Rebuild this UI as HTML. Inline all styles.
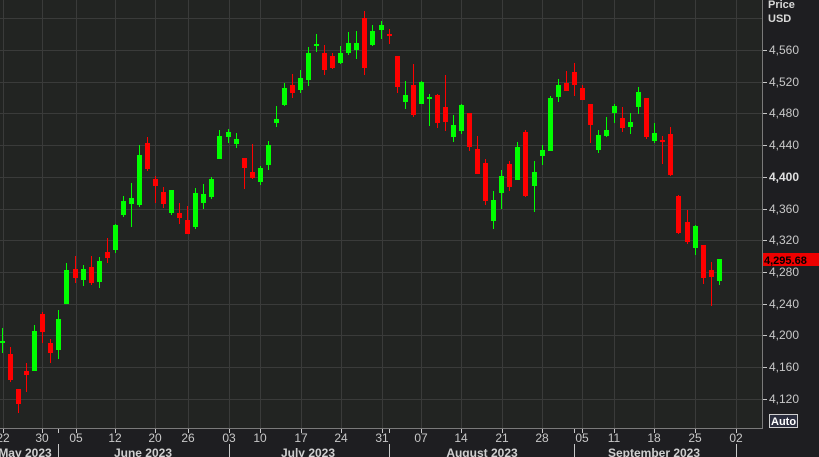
<!DOCTYPE html>
<html><head><meta charset="utf-8"><style>
html,body{margin:0;padding:0;background:#1e1e21;width:819px;height:457px;overflow:hidden}
svg{display:block}
text{font-family:"Liberation Sans",sans-serif}
</style></head><body>
<svg id="s" width="819" height="457" xmlns="http://www.w3.org/2000/svg">
<rect x="0" y="0" width="819" height="457" fill="#1e1e21"/>
<rect x="0" y="0" width="762" height="428" fill="#222422"/>
<g id="grid" stroke="#3a3b3a" stroke-width="1"></g>
<g id="c"></g>
<line x1="762.5" y1="0" x2="762.5" y2="428" stroke="#7a7a7a"/>
<line x1="0" y1="428.5" x2="763" y2="428.5" stroke="#7a7a7a"/>
<g id="ax" fill="#c8c8c8" font-size="12"></g>
<text x="768" y="8" fill="#d8d8d8" font-size="11" font-weight="bold">Price</text>
<text x="768" y="22" fill="#d8d8d8" font-size="11" font-weight="bold">USD</text>
<rect x="763" y="253" width="56" height="13" fill="#ee0000"/>
<text x="764" y="264" fill="#000" font-size="11" font-weight="bold">4,295.68</text>
<rect x="769.5" y="414.5" width="28" height="13" fill="#2b2e3e" stroke="#d0d0d0"/>
<text x="771" y="425" fill="#fff" font-size="11" font-weight="bold">Auto</text>
<g id="bx" fill="#c8c8c8" font-size="12"></g>
</svg>
<script>
var ns="http://www.w3.org/2000/svg";
function el(p,t,a,txt){var e=document.createElementNS(ns,t);for(var k in a)e.setAttribute(k,a[k]);if(txt)e.textContent=txt;document.getElementById(p).appendChild(e);return e;}
var vx=[3,42,76,115,155,188,229,260,301,341,382,421,461,502,542,582,614,654,695,736];
vx.forEach(function(x){el("grid","line",{x1:x+.5,y1:0,x2:x+.5,y2:428});});
var levels=[4600,4560,4520,4480,4440,4400,4360,4320,4280,4240,4200,4160,4120];
levels.forEach(function(p){var y=Math.round(50+(4560-p)*0.7927);
 el("grid","line",{x1:0,y1:y+.5,x2:762,y2:y+.5});
 if(p<4600){el("ax","line",{x1:763,y1:y+.5,x2:767,y2:y+.5,stroke:"#c8c8c8"});
 var t=el("ax","text",{x:769,y:y+4},(p+"").replace(/(\d)(\d{3})$/,"$1,$2"));
 if(p==4400){t.setAttribute("font-weight","bold");t.setAttribute("fill","#e0e0e0");}}
});
var days=[[3,"22"],[42,"30"],[76,"05"],[115,"12"],[155,"20"],[188,"26"],[229,"03"],[260,"10"],[301,"17"],[341,"24"],[382,"31"],[421,"07"],[461,"14"],[502,"21"],[542,"28"],[582,"05"],[614,"11"],[654,"18"],[695,"25"],[736,"02"]];
days.forEach(function(d){el("bx","line",{x1:d[0]+.5,y1:429,x2:d[0]+.5,y2:433,stroke:"#c8c8c8"});el("bx","text",{x:d[0],y:442,"text-anchor":"middle"},d[1]);});
[58,229,389,574,736].forEach(function(x){el("bx","line",{x1:x+.5,y1:429,x2:x+.5,y2:433,stroke:"#c8c8c8"});});
[229,389,574,736].forEach(function(x){el("bx","line",{x1:x+.5,y1:444,x2:x+.5,y2:457,stroke:"#c8c8c8"});});
el("bx","line",{x1:58.5,y1:444,x2:58.5,y2:457,stroke:"#c8c8c8"});
[[25,"May 2023"],[143,"June 2023"],[308,"July 2023"],[482,"August 2023"],[654,"September 2023"]].forEach(function(m){el("bx","text",{x:m[0],y:457,"text-anchor":"middle","font-weight":"bold",fill:"#d0d0d0"},m[1]);});
var C=[
[2,341,343,328,353,1],[10,354,380,347,382,0],[18,389,404,389,413,0],[26,371,375,363,392,0],[34,331,371,325,371,1],[42,314,332,312,343,0],[50,343,353,339,363,0],[58,319,350,310,359,1],[66,270,304,263,304,1],[75,269,278,256,283,0],[83,269,280,265,286,1],[91,267,283,256,285,0],[99,261,282,257,288,1],[107,252,258,238,263,0],[115,225,250,224,253,1],[123,201,215,196,217,1],[131,198,204,183,227,1],[139,155,205,145,207,1],[147,143,169,137,171,0],[155,179,186,176,203,0],[163,192,204,187,208,0],[171,190,213,190,215,1],[179,213,218,203,224,0],[187,220,234,206,234,0],[195,193,227,188,229,1],[203,194,203,184,209,1],[211,179,197,177,199,1],[219,136,159,130,159,1],
[228,132,137,129,143,1],[236,139,144,133,148,1],[244,158,168,158,189,0],[252,172,178,144,179,0],[260,168,182,166,185,1],[268,145,165,141,170,1],[276,119,123,106,127,1],[284,88,105,83,106,1],[292,85,93,74,98,0],[300,78,90,70,93,1],[308,53,80,47,86,1],[316,44,46,34,52,1],[324,53,70,45,75,0],[332,56,68,53,69,0],[340,53,63,46,64,1],[348,43,53,32,55,1],[356,43,50,31,59,1],[364,18,68,11,75,0],[372,31,45,25,46,1],[381,25,30,21,39,1],[389,34,35,29,44,0],
[397,56,87,56,93,0],[405,95,102,81,109,1],[413,85,115,64,117,0],[421,82,104,81,104,1],[429,97,99,94,126,1],[437,95,123,94,128,0],[445,107,122,75,131,0],[453,125,137,115,142,1],[461,105,131,104,134,1],[469,113,147,113,151,0],[477,149,174,136,174,0],[485,163,201,159,205,0],[493,200,221,191,229,1],[501,176,193,170,209,1],[509,164,187,161,191,0],[517,147,180,142,180,1],[525,132,196,130,197,0],[534,172,186,161,212,1],[542,150,156,145,165,1],[550,98,151,96,151,1],[558,85,97,79,102,1],[566,83,91,71,91,0],[574,72,85,63,96,0],[582,88,100,85,100,0],[590,104,125,104,143,0],[598,135,150,130,153,1],
[606,130,136,117,137,1],[614,106,113,104,123,1],[622,118,128,107,132,0],[630,122,127,113,134,1],[638,92,107,87,114,1],[646,98,137,98,139,0],[654,133,141,123,143,1],[662,140,141,136,164,0],[670,134,175,127,176,0],[678,196,233,195,234,0],[687,222,242,210,244,0],[695,226,248,225,255,1],[703,245,278,245,284,0],[711,270,277,262,306,0],[719,259,281,259,285,1]];
C.forEach(function(c){var col=c[5]?"#00ff00":"#ff0000";
 el("c","rect",{x:c[0],y:c[3],width:1,height:c[4]-c[3],fill:col});
 var h=Math.max(2,c[2]-c[1]);
 el("c","rect",{x:c[0]-2,y:c[1],width:5,height:h,fill:col});});
</script>
</body></html>
